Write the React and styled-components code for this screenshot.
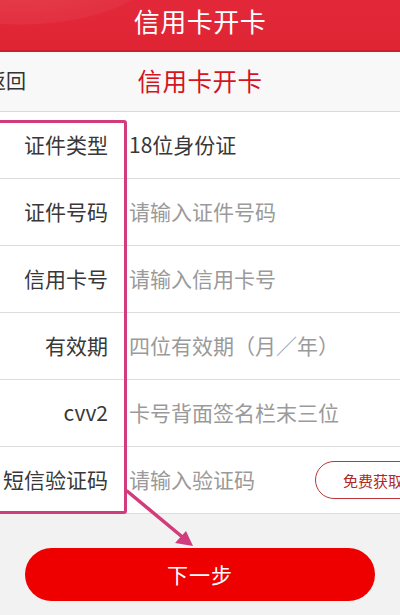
import React from "react";
import styled, { createGlobalStyle } from "styled-components";

const Global = createGlobalStyle`
  html, body { margin: 0; padding: 0; background: #f2f2f2; }
  body { font-family: "Noto Sans CJK SC", "Noto Sans", sans-serif; }
  * { box-sizing: border-box; }
`;

const Page = styled.div`
  position: relative;
  width: 400px;
  height: 615px;
  overflow: hidden;
  background: #f2f2f2;
`;

const TopBar = styled.header`
  height: 52px;
  display: flex;
  align-items: center;
  justify-content: center;
  padding-bottom: 9px;
  background: radial-gradient(ellipse 220px 90px at 20px -30px, #e84550 0%, #e23040 60%, transparent 61%),
    linear-gradient(180deg, #e3283a 0%, #df2434 100%);
  border-bottom: 2px solid #c81e2d;
  color: #fff;
  font-size: 26px;
  letter-spacing: 0.5px;
`;

const NavBar = styled.nav`
  height: 60px;
  display: grid;
  grid-template-columns: 1fr auto 1fr;
  align-items: center;
  padding-bottom: 3px;
  background: #f8f8f8;
  border-bottom: 1px solid #d8d8d8;
`;

const Back = styled.span`
  margin-left: -14px;
  font-size: 20px;
  color: #333;
`;

const NavTitle = styled.span`
  font-size: 24.5px;
  color: #d4141e;
  letter-spacing: 0.5px;
`;

const Form = styled.div`
  background: #fff;
`;

const Row = styled.div`
  height: 67px;
  display: flex;
  align-items: center;
  padding-bottom: 3px;
  border-bottom: 1px solid #dcdcdc;
`;

const Label = styled.div`
  width: 108px;
  flex: none;
  text-align: right;
  font-size: 21px;
  color: #383838;
  white-space: nowrap;
`;

const Value = styled.div`
  flex: 1;
  margin-left: 21px;
  font-size: 21px;
  color: ${(p) => (p.$placeholder ? "#9a9a9a" : "#383838")};
  white-space: nowrap;
  overflow: hidden;
`;

const CodeButton = styled.div`
  flex: none;
  margin-right: -60px;
  margin-top: 3px;
  height: 38px;
  width: 145px;
  border: 1.5px solid #b83636;
  border-radius: 19px;
  display: flex;
  align-items: center;
  padding-left: 27px;
  font-size: 15px;
  color: #b02828;
  white-space: nowrap;
`;

const Footer = styled.div`
  padding: 34px 25px 0;
`;

const NextButton = styled.div`
  height: 53px;
  border-radius: 27px;
  background: #ee0000;
  color: #fff;
  font-size: 21px;
  display: flex;
  align-items: center;
  justify-content: center;
  padding-bottom: 2px;
  letter-spacing: 1px;
`;

const Highlight = styled.div`
  position: absolute;
  left: -10px;
  top: 120px;
  width: 137px;
  height: 394px;
  border: 3.5px solid #d23c7c;
  border-radius: 3px;
  pointer-events: none;
`;

const Arrow = styled.svg`
  position: absolute;
  left: 120px;
  top: 485px;
  width: 90px;
  height: 70px;
  pointer-events: none;
`;

const rows = [
  { label: "证件类型", value: "18位身份证" },
  { label: "证件号码", value: "请输入证件号码", ph: true },
  { label: "信用卡号", value: "请输入信用卡号", ph: true },
  { label: "有效期", value: "四位有效期（月／年）", ph: true },
  { label: "cvv2", value: "卡号背面签名栏末三位", ph: true },
  { label: "短信验证码", value: "请输入验证码", ph: true, code: true },
];

export default function App() {
  return (
    <Page>
      <Global />
      <TopBar>信用卡开卡</TopBar>
      <NavBar>
        <Back>返回</Back>
        <NavTitle>信用卡开卡</NavTitle>
        <span />
      </NavBar>
      <Form>
        {rows.map((r) => (
          <Row key={r.label}>
            <Label>{r.label}</Label>
            <Value $placeholder={r.ph}>{r.value}</Value>
            {r.code && <CodeButton>免费获取验证码</CodeButton>}
          </Row>
        ))}
      </Form>
      <Footer>
        <NextButton>下一步</NextButton>
      </Footer>
      <Highlight />
      <Arrow viewBox="0 0 90 70">
        <line x1="7" y1="6" x2="66" y2="55" stroke="#d23c7c" strokeWidth="3.5" strokeLinecap="round" />
        <polygon points="73,61 55,58 66,46" fill="#d23c7c" />
      </Arrow>
    </Page>
  );
}
